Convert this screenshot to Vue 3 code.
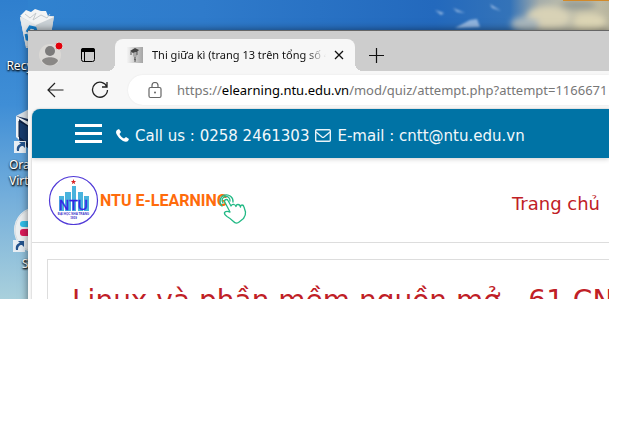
<script setup>
import { ref } from 'vue'

const tabTitle = 'Thi giữa kì (trang 13 trên tổng số 40)'
const url = ref({
  scheme: 'https://',
  host: 'elearning.ntu.edu.vn',
  path: '/mod/quiz/attempt.php?attempt=1166671',
})
</script>

<template>
  <main class="desktop">
    <svg class="sky" viewBox="0 0 609 299" preserveAspectRatio="none" aria-hidden="true">
      <defs>
        <linearGradient id="skyBase" x1="0" y1="0" x2="0" y2="1">
          <stop offset="0" stop-color="#2f7fce" />
          <stop offset="0.35" stop-color="#3f8ed6" />
          <stop offset="0.65" stop-color="#72addb" />
          <stop offset="1" stop-color="#a9d0dc" />
        </linearGradient>
        <linearGradient id="skyTop" x1="0" y1="0" x2="1" y2="0">
          <stop offset="0" stop-color="#3082cf" />
          <stop offset="0.3" stop-color="#2f7bcb" />
          <stop offset="0.7" stop-color="#2369bd" />
          <stop offset="0.83" stop-color="#3473b8" />
          <stop offset="0.88" stop-color="#a4acaa" />
          <stop offset="0.95" stop-color="#c9c5ac" />
          <stop offset="1" stop-color="#b8b59f" />
        </linearGradient>
        <filter id="soft" x="-30%" y="-50%" width="160%" height="200%"><feGaussianBlur stdDeviation="3" /></filter>
        <filter id="wisp" x="-30%" y="-80%" width="160%" height="260%"><feGaussianBlur stdDeviation="1" /></filter>
      </defs>
      <rect width="609" height="299" fill="url(#skyBase)" />
      <rect x="28" width="581" height="30" fill="url(#skyTop)" />
      <g filter="url(#soft)">
        <ellipse cx="548" cy="18" rx="22" ry="12" fill="#d8d2b6" />
        <ellipse cx="590" cy="22" rx="16" ry="8" fill="#ddd6b5" />
        <ellipse cx="578" cy="5" rx="18" ry="5" fill="#969c96" />
        <ellipse cx="525" cy="24" rx="14" ry="7" fill="#a9b7bd" />
      </g>
      <g fill="#90b4df" filter="url(#wisp)">
        <path d="M435 10l9 3-3 2zM453 8l12 5-8-1zM455 28l15-8 7-1 3 8zM490 4l11 7-9-3z" />
      </g>
      <rect x="563" width="46" height="1" fill="#d28a2b" />
    </svg>

    <section class="shortcuts" aria-label="Desktop shortcuts">
      <div class="shortcut recycle">
        <svg width="42" height="42" viewBox="0 0 42 42" aria-hidden="true">
          <path d="M3 9l34-1-5 31-23 1z" fill="#dce2e6" />
          <path d="M3 9l16 6 18-7-5 31-13 2-10-2z" fill="#cbd2d7" />
          <path d="M3 9l16 7v24L9 38z" fill="#e6eaed" />
          <path d="M3 8l6-6 5 2 4-3 6 2 5 0 2 5 6 1-18 8z" fill="#f4f5f5" />
          <path d="M8 6l5 4 6-5-3 7 8-5 6 3 3-4" fill="none" stroke="#c6cbce" />
          <path d="M10 24l3-5 5 1 1 3M9 26l1 5 4 1M16 32l4-2-1-4" fill="none" stroke="#1681d0" stroke-width="3" />
        </svg>
        <span>Recycle Bin</span>
      </div>
      <div class="shortcut oracle">
        <svg width="38" height="48" viewBox="0 0 38 48" aria-hidden="true">
          <path d="M2 11L20 1l17 6v31L18 46 3 32z" fill="#142c55" />
          <path d="M2 10L19 1l18 5-15 9z" fill="#dce3eb" />
          <path d="M2 10v21l3 3V13l10 7v-4z" fill="#eef2f6" />
          <path d="M5 15l12 7v19L5 31z" fill="#173b6d" stroke="#0c1b36" />
          <rect y="35" width="12" height="12" fill="#e7edf3" />
          <path d="M3 45c-1-5 2-7 4-7l-2-2h6v6l-2-2c-3 0-4 2-4 5z" fill="#25538c" />
        </svg>
        <span>Oracle VM</span><span>VirtualBox</span>
      </div>
      <div class="shortcut slack">
        <svg width="46" height="48" viewBox="0 0 46 48" aria-hidden="true">
          <circle cx="24" cy="23" r="23" fill="#edf0f2" />
          <circle cx="24" cy="23" r="22" fill="none" stroke="#d6dde1" />
          <rect x="7" y="14" width="17" height="6" rx="3" fill="#31bfe9" />
          <rect x="7" y="22" width="17" height="7" rx="3" fill="#dc1b5a" />
          <rect y="33" width="12" height="12" fill="#e7edf3" />
          <path d="M3 43c-1-5 2-7 4-7l-2-2h6v6l-2-2c-3 0-4 2-4 5z" fill="#25538c" />
        </svg>
        <span>Slack</span>
      </div>
    </section>

    <section class="window">
      <div class="tabs">
        <button class="avatar" aria-label="Profile">
          <svg width="28" height="28" viewBox="0 0 28 28">
            <circle cx="12" cy="16" r="11" fill="#dad8d5" />
            <circle cx="12" cy="12" r="5" fill="#7c7b7a" />
            <path d="M4 22c1-5 15-5 16 0-4 6-12 6-16 0z" fill="#8a8886" />
            <circle cx="21" cy="7" r="4" fill="#e3000b" stroke="#dad8d5" />
          </svg>
        </button>
        <button class="actions" aria-label="Tab actions">
          <svg width="14" height="14" viewBox="0 0 14 14"><rect x="0.5" y="0.5" width="13" height="13" rx="2" fill="none" stroke="#000" /><path d="M0 2q0-2 2-2h10q2 0 2 2v2H0zM3 4h1v10H3z" /></svg>
        </button>
        <div class="tab">
          <svg class="favicon" width="16" height="16" viewBox="0 0 16 16" aria-hidden="true">
            <defs><linearGradient id="fav"><stop stop-color="#f4f4f4" /><stop offset="1" stop-color="#a5a5a5" /></linearGradient></defs>
            <rect width="16" height="16" fill="url(#fav)" />
            <path d="M3 4l5-3 4 2-2 2-4 1z" fill="#444" /><path d="M6 6l4-1v4l-2 2-2-2z" fill="#aaa" /><path d="M4 5v3M10 5v3M8 10v5M7 12l2 1" stroke="#555" fill="none" />
          </svg>
          <span class="title">{{ tabTitle }}</span>
          <button class="close" aria-label="Close tab">
            <svg width="10" height="10" viewBox="0 0 10 10"><path d="M1 1l8 8M9 1L1 9" stroke="#111" stroke-width="1.3" /></svg>
          </button>
        </div>
        <button class="plus" aria-label="New tab">
          <svg width="15" height="15" viewBox="0 0 15 15"><path d="M7.5 0v15M0 7.5h15" stroke="#111" stroke-width="1.2" /></svg>
        </button>
      </div>

      <div class="toolbar">
        <button aria-label="Back"><svg width="17" height="16" viewBox="0 0 17 16"><path d="M16.500 8H1M8 1L1 8l7 7" fill="none" stroke="#222" stroke-width="1.2" /></svg></button>
        <button aria-label="Refresh"><svg width="18" height="18" viewBox="0 0 18 18"><path d="M16 6A7.500 7.500 0 1 0 16.500 9M16 1v5h-5" fill="none" stroke="#222" stroke-width="1.3" /></svg></button>
        <div class="address">
          <svg width="14" height="17" viewBox="0 0 14 17" aria-hidden="true"><rect x="1" y="5.500" width="12" height="10" rx="1.500" fill="none" stroke="#666" stroke-width="1.200" /><path d="M4 5V3.500a3 3 0 0 1 6 0V5" fill="none" stroke="#666" stroke-width="1.200" /><circle cx="7" cy="10.500" r="1" fill="#666" /></svg>
          <a href="#" class="url">{{ url.scheme }}<b>{{ url.host }}</b>{{ url.path }}</a>
        </div>
      </div>

      <article class="page">
        <div class="contact">
          <button class="menu" aria-label="Menu"><i></i><i></i><i></i></button>
          <p>
            <svg width="13" height="13" viewBox="0 0 13 13" aria-hidden="true"><path d="M1 1l2-1 2 3-1.500 2c1 2 2.500 3.500 4.500 4.500l2-1.500 3 2-1 2c-1 1-3 1-5 0C4 10 2 8 .5 5c-.8-2-.5-3 .5-4z" fill="#fff" /></svg>
            <span>Call us : 0258 2461303</span>
            <svg width="16" height="13" viewBox="0 0 16 13" aria-hidden="true"><rect x=".7" y=".7" width="14.600" height="11.600" rx="1" fill="none" stroke="#e8f3f8" stroke-width="1.400" /><path d="M1 3l6 5q1 .8 2 0l6-5" fill="none" stroke="#e8f3f8" stroke-width="1.400" /></svg>
            <span>E-mail : cntt@ntu.edu.vn</span>
          </p>
        </div>

        <header class="site">
          <a href="#" class="brand" aria-label="NTU E-Learning">
            <svg width="200" height="50" viewBox="0 0 200 50">
              <circle cx="25.500" cy="25.500" r="24" fill="#fff" stroke="#5039d7" stroke-width="1.200" />
              <path d="M11 21h5v15h-5zM17 17h6v19h-6zM24 11h4v25h-4zM30 17h5v19h-5zM36 21h5v15h-5z" fill="#49b3dd" />
              <path d="M25.500 4l.7 2h2l-1.600 1.200.6 2-1.700-1.200-1.700 1.200.6-2L22.800 6h2z" fill="#d92525" />
              <text x="25.500" y="35" text-anchor="middle" class="crest">NTU</text>
              <text x="25.500" y="40" text-anchor="middle" class="motto">ĐẠI HỌC NHA TRANG</text>
              <text x="25.500" y="44" text-anchor="middle" class="motto">1959</text>
              <text x="52" y="31" class="name">NTU E-LEARNING</text>
              <g fill="none" stroke="#22b985" stroke-width="1.300" stroke-linecap="round" stroke-linejoin="round">
                <path d="M174 31a6.500 6.500 0 1 1 11-4" /><path d="M175 28a4 4 0 1 1 7-2" />
                <path d="M182 37L176.500 26.500q0-2 2-2 1 0 1.500 1L183 31q1-2 3-1.500 1.500.5 2 2 0-2 2-2 2 0 2.500 2.500 0-2 1.500-2 1.500 0 2 2l1.500 5q.5 3-2 6.500l-5 4q-3 1.500-5-1-3-3-6.500-5-3-2-2.500-4 2-2 5-.5z" fill="#fff" />
              </g>
            </svg>
          </a>
          <nav><a href="#">Trang chủ</a></nav>
        </header>

        <section class="course"><h1>Linux và phần mềm nguồn mở - 61.CNTT</h1></section>
      </article>
    </section>
  </main>
</template>

<style>
body { margin: 0; background: #fff; }
</style>

<style scoped>
* { box-sizing: border-box; }
button { border: 0; padding: 0; background: none; display: flex; align-items: center; justify-content: center; flex: none; }
svg { display: block; flex: none; }
.desktop { position: relative; height: 299px; margin-right: 11px; overflow: hidden; font-family: "Noto Sans", sans-serif; }
.sky { position: absolute; inset: 0; width: 100%; height: 100%; }
.shortcut { position: absolute; display: flex; flex-direction: column; align-items: center; color: #fff; font-size: 12px; line-height: 16px; white-space: nowrap; text-shadow: 1px 1px 2px #000, 0 1px 2px #000; }
.recycle { left: 6px; top: 8px; width: 64px; }
.recycle span { margin-top: 8px; }
.oracle { left: 9px; top: 106px; align-items: flex-start; }
.oracle svg { margin-left: 5px; }
.oracle span:first-of-type { margin-top: 3px; }
.slack { left: 13px; top: 207px; }
.slack span { margin-top: 1px; }
.window { position: absolute; left: 28px; right: 0; top: 30px; background: #f7f7f7; border-top: 1px solid #666; box-shadow: 0 0 8px rgba(0, 0, 0, 0.5); }
.tabs { display: flex; align-items: center; height: 40px; padding-left: 10px; background: #cdcdcd; }
.avatar { width: 28px; margin-top: 4px; }
.actions { width: 14px; margin: 8px 20px 0 15px; }
.tab { position: relative; display: flex; align-items: center; align-self: flex-end; width: 240px; height: 32px; padding: 0 11px 0 12px; border-radius: 8px 8px 0 0; background: #f7f7f7; }
.tab::before, .tab::after { content: ""; position: absolute; bottom: 0; width: 8px; height: 8px; }
.tab::before { right: 100%; background: radial-gradient(circle at 0 0, #cdcdcd 8px, #f7f7f7 8px); }
.tab::after { left: 100%; background: radial-gradient(circle at 100% 0, #cdcdcd 8px, #f7f7f7 8px); }
.title { flex: 1; min-width: 0; margin: 0 8px 0 9px; overflow: hidden; white-space: nowrap; font-size: 11px; line-height: 20px; color: #111; mask-image: linear-gradient(to right, #000 88%, transparent 100%); }
.close { width: 10px; }
.plus { margin: 8px 0 0 14px; }
.toolbar { display: flex; align-items: center; height: 38px; padding: 0 0 0 19px; gap: 27px; }
.address { flex: 1; min-width: 0; display: flex; align-items: center; height: 30px; margin-left: -8px; padding-left: 20px; gap: 15px; border-radius: 15px 0 0 15px; background: #fff; box-shadow: 0 0 2px rgba(0, 0, 0, 0.08); }
.url { flex: 1; min-width: 0; overflow: hidden; white-space: nowrap; font-size: 13px; line-height: 20px; color: #777; text-decoration: none; }
.url b { font-weight: 400; color: #000; }
.page { margin-left: 4px; background: #fff; border-top-left-radius: 8px; overflow: hidden; font-family: "DejaVu Sans", Verdana, sans-serif; box-shadow: 0 0 2px rgba(0, 0, 0, 0.3); }
.contact { display: flex; align-items: center; height: 49px; padding-left: 43px; gap: 14px; background: #0073a5; box-shadow: 0 1px 5px rgba(0, 0, 0, 0.2); position: relative; }
.menu { flex-direction: column; gap: 5px; width: 27px; }
.menu i { width: 100%; height: 3px; background: #fff; }
.contact p { display: flex; align-items: center; gap: 6px; margin: 4px 0 0; font-size: 15px; line-height: 20px; color: #f2f8fb; white-space: nowrap; }
.site { display: flex; align-items: center; justify-content: space-between; height: 85px; padding: 0 9px 0 16px; border-bottom: 1px solid #ddd; }
.site nav { margin-top: 8px; font-size: 18px; line-height: 24px; }
.site a { color: #c02026; text-decoration: none; white-space: nowrap; }
.crest { font: 14px "Liberation Sans", sans-serif; fill: #3521e6; stroke: #3521e6; stroke-width: 0.4px; }
.motto { font: bold 3px "Liberation Sans", sans-serif; fill: #3a2fc8; }
.name { font: bold 16px Roboto, "Liberation Sans", sans-serif; fill: #ff6b0b; }
.course { margin: 16px 0 0 15px; padding: 23px 24px; border: 1px solid #ddd; border-right: 0; overflow: hidden; }
.course h1 { margin: 0; font-size: 28px; line-height: 36px; font-weight: 400; color: #c02026; white-space: nowrap; }
</style>
